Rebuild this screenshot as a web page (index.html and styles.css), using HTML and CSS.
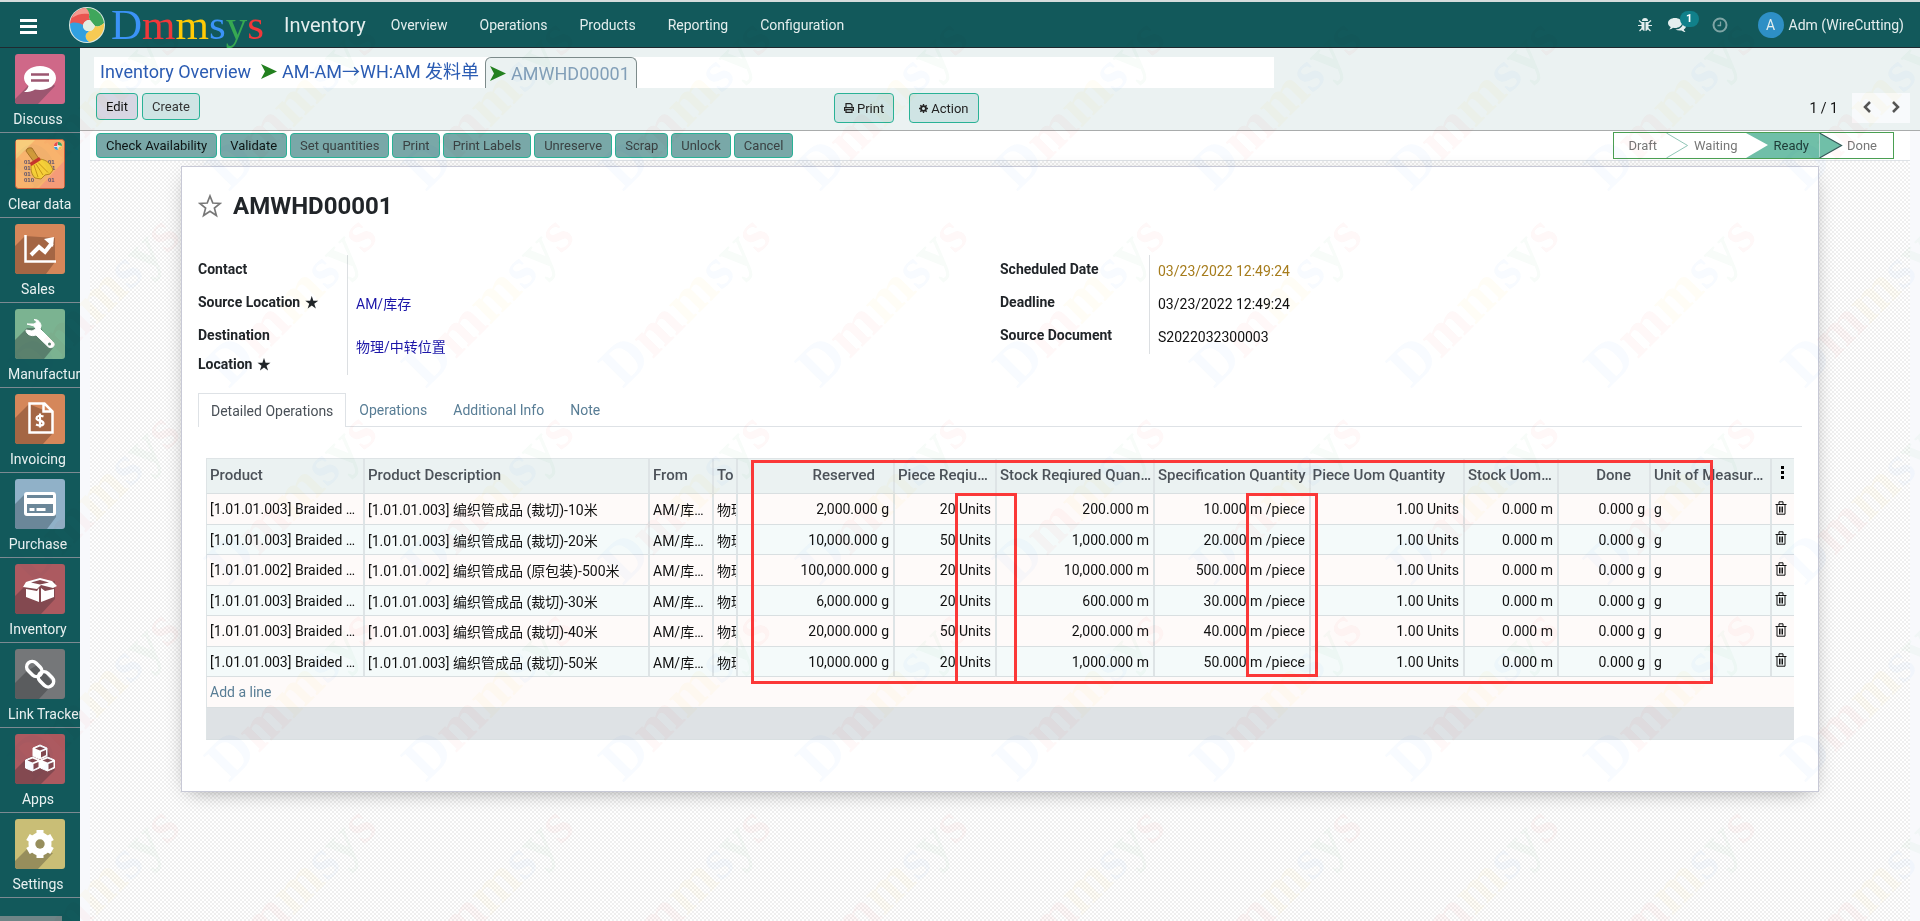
FILE: index.html
```html
<!DOCTYPE html>
<html lang="en">

<head>
    <meta charset="utf-8">
    <title>AMWHD00001 - Inventory</title>
    <link rel="stylesheet" href="styles.css">
</head>

<body>
    <svg class="defs" aria-hidden="true">
        <symbol id="trash" viewBox="0 0 12 14">
            <path d="M.5 3.500h11M4 3V.8h4V3M2 3.500v9.700h8V3.500M4.500 5.500v6M6 5.500v6M7.500 5.500v6" fill="none" stroke="#111" />
        </symbol>
        <symbol id="arrow" viewBox="0 0 16 15">
            <path d="M0 0l16 7.500L0 15l4-7.500z" fill="#23801f" />
        </symbol>
    </svg>

    <header class="navbar">
        <button class="menu-toggle" aria-label="Menu"><span></span><span></span><span></span></button>
        <a href="#" class="brand">
            <svg class="brand-ball" viewBox="0 0 36 36">
                <circle cx="18" cy="18" r="18" fill="#dcebe4" />
                <path d="M1 17C1 8 9 1 17 1c3 3 4 6 3 9l1 3c-4 0-6 2-7 5l-5-1c-3-1-6-1-8 0z" fill="#ea5550" />
                <path d="M3 11C6 4 12 1 17 1c2 2 3 4 3 6C14 6 8 7 3 11z" fill="#f49a90" />
                <path d="M17 1c9-1 17 6 18 15-3 3-6 4-9 3l-5-6-1-3c1-3 0-6-3-9z" fill="#3fa65b" />
                <path d="M35 16c1 9-5 17-15 19-3-2-4-5-3-8l3-3c3 0 5-2 6-5 3 1 6 0 9-3z" fill="#f6ca54" />
                <path d="M1 17c3-2 7-2 13 1 0 4 2 6 6 6l-3 3c-1 3 0 6 3 8C9 36 1 28 1 17z" fill="#31a0e0" />
                <path d="M14 18c1-3 3-5 7-5l5 6c-1 3-3 5-6 5-4 0-6-2-6-6z" fill="#e3eee2" />
            </svg>
            <span class="brand-name"><span class="c-blue">D</span><span class="c-red">m</span><span class="c-yellow">m</span><span class="c-blue">s</span><span class="c-green">y</span><span class="c-red">s</span></span>
        </a>
        <a href="#" class="app-name">Inventory</a>
        <nav class="nav-menu">
            <a href="#">Overview</a>
            <a href="#">Operations</a>
            <a href="#">Products</a>
            <a href="#">Reporting</a>
            <a href="#">Configuration</a>
        </nav>
        <div class="systray">
            <a href="#" class="tray-icon" aria-label="Debug">
                <svg width="14" height="14" viewBox="0 0 14 14">
                    <path d="M4 3a3 3 0 0 1 6 0z" fill="#e4eeee" />
                    <path d="M3.500 4h3v9C4.500 12.500 3.500 11 3.500 9zM7.500 4h3v5c0 2-1 3.500-3 4z" fill="#e4eeee" />
                    <path d="M1 2.500L4 5M13 2.500L10 5M0 7.500h4M14 7.500h-4M1.500 13L4.500 10M12.500 13L9.500 10" stroke="#e4eeee" stroke-width="1.200" />
                </svg>
            </a>
            <a href="#" class="tray-icon tray-chat" aria-label="Messages">
                <svg width="18" height="16" viewBox="0 0 18 16">
                    <path d="M7 1c4 0 7 2.200 7 5s-3 5-7 5c-.7 0-1.400 0-2-.2C3.800 12 2.500 12.500 1 12.500c1-.8 1.500-1.500 1.700-2.500C1 9 0 7.700 0 6c0-2.800 3-5 7-5z" fill="#e4eeee" />
                    <path d="M15 5c1.800 1 3 2.300 3 4 0 1.500-.8 2.700-2.200 3.500.2 1 .8 1.700 1.700 2.500-1.600 0-3-.7-4-1.500-2.500.3-4.500 0-6-1C12 12.300 15.500 9.500 15 5z" fill="#e4eeee" />
                </svg>
                <span class="badge">1</span>
            </a>
            <a href="#" class="tray-icon" aria-label="Activities">
                <svg width="16" height="16" viewBox="0 0 16 16">
                    <circle cx="8" cy="8" r="6.500" fill="none" stroke="#7fa5a5" stroke-width="2" />
                    <path d="M8.500 4.500v4H5.500" fill="none" stroke="#7fa5a5" stroke-width="1.300" />
                </svg>
            </a>
            <a href="#" class="user"><span class="avatar">A</span>Adm (WireCutting)</a>
        </div>
    </header>

    <div class="layout">
        <aside class="sidebar">
            <a href="#" class="app">
                <svg class="app-icon" viewBox="0 0 50 50">
                    <rect width="50" height="50" rx="3" fill="#cf6888" />
                    <path d="M9 36L0 45v2q0 3 3 3h20l17-18-12-16z" fill="#9c5670" />
                    <path d="M25 12c9 0 16 5 16 12s-7 12-16 12l-5-.5c-3 2-6 2.500-11 2.500 3-2 4-4 4.500-6C11 30 9 27 9 24c0-7 7-12 16-12z" fill="#fff" />
                    <path d="M16 20.500h18M16 26.500h18" stroke="#9c5670" stroke-width="2.500" />
                </svg>
                <span class="app-label">Discuss</span>
            </a>
            <a href="#" class="app">
                <svg class="app-icon" viewBox="0 0 50 50">
                    <rect x=".5" y=".5" width="49" height="49" rx="3" fill="#f8b36d" stroke="#c9603d" />
                    <path d="M1 20L20 1H1z" fill="#f8cd7c" />
                    <path d="M49 22L24 49h25z" fill="#f59b78" />
                    <g class="bits" fill="#58506e">
                        <text x="9" y="25">01</text>
                        <text x="33" y="25">01</text>
                        <text x="9" y="31">01</text>
                        <text x="37" y="31">1</text>
                        <text x="9" y="37">01</text>
                        <text x="9" y="43">010</text>
                        <text x="33" y="43">01</text>
                    </g>
                    <path d="M11 12q1-4 6-3l7 11-5 3z" fill="#d09a3a" stroke="#8c5c18" stroke-width=".7" />
                    <path d="M16 26l9-6c7 1 11 5 13 11l-3 4-5 1-4 4-6-1c-4-4-4-8-4-13z" fill="#f6cf38" stroke="#a87912" stroke-width=".8" />
                    <path d="M15.500 25.500l9.500-6" stroke="#c5352c" stroke-width="3.500" />
                    <path d="M19 26l4 12M21 25l7 11M23 23.500l10 10" stroke="#c08d14" stroke-width=".9" />
                    <circle cx="43" cy="7" r="4" fill="#eee" />
                    <path d="M39 7a4 4 0 0 1 4-4l-1 4z" fill="#e8504b" />
                    <path d="M43 3a4 4 0 0 1 4 4l-4-1z" fill="#3fa65b" />
                    <path d="M47 7a4 4 0 0 1-4 4l1-3z" fill="#f3c549" />
                    <path d="M39 8a4 4 0 0 0 4 3l-1-3z" fill="#35a3da" />
                </svg>
                <span class="app-label">Clear data</span>
            </a>
            <a href="#" class="app">
                <svg class="app-icon" viewBox="0 0 50 50">
                    <rect width="50" height="50" rx="3" fill="#d5875a" />
                    <path d="M10 12L0 22v25q0 3 3 3h28l9-12V14z" fill="#a46644" />
                    <path d="M10.500 11v26.500H41" fill="none" stroke="#fff" stroke-width="2.500" />
                    <path d="M16 31l8-8 6 5 7-9" fill="none" stroke="#fff" stroke-width="4" />
                    <path d="M29 15l10-2-1 10z" fill="#fff" />
                </svg>
                <span class="app-label">Sales</span>
            </a>
            <a href="#" class="app">
                <svg class="app-icon" viewBox="0 0 50 50">
                    <rect width="50" height="50" rx="3" fill="#7bb391" />
                    <path d="M12 19L0 31v16q0 3 3 3h26l9-11-12-20z" fill="#5b816d" />
                    <path d="M12 15h7l3-2-3-2.500C23 10 26 14 26 17l-1 3 12.500 12.500c4 3 0 8-4 5.500L21 26c-5 2-10-1-10-5l6 1 4-2-2-3z" fill="#fff" stroke="#fff" />
                    <circle cx="34.500" cy="35" r="1.500" fill="#5b816d" />
                </svg>
                <span class="app-label">Manufacturing</span>
            </a>
            <a href="#" class="app">
                <svg class="app-icon" viewBox="0 0 50 50">
                    <rect width="50" height="50" rx="3" fill="#d5875a" />
                    <path d="M14 10L0 24v23q0 3 3 3h25l10-11V20z" fill="#a46644" />
                    <path d="M14.500 9.500h15l8 8v21h-23zM28.500 9.500v8h9" fill="none" stroke="#fff" stroke-width="2.500" />
                    <path d="M28.500 22.500c-4-1.500-7-.5-7 1.700 0 3.300 7 1.500 7 5 0 2.500-4 3-7.500 1.300M25 19.500v14" fill="none" stroke="#fff" stroke-width="2.200" />
                </svg>
                <span class="app-label">Invoicing</span>
            </a>
            <a href="#" class="app">
                <svg class="app-icon" viewBox="0 0 50 50">
                    <rect width="50" height="50" rx="3" fill="#90b1c8" />
                    <path d="M10 15L0 25v22q0 3 3 3h29l9-12V14z" fill="#6b8799" />
                    <rect x="10.500" y="14.500" width="29" height="21" rx="1.500" fill="none" stroke="#fff" stroke-width="3" />
                    <path d="M10 22h30" stroke="#fff" stroke-width="6" />
                    <path d="M14.500 30.500h5M21.500 30.500h9" stroke="#fff" stroke-width="3" />
                </svg>
                <span class="app-label">Purchase</span>
            </a>
            <a href="#" class="app">
                <svg class="app-icon" viewBox="0 0 50 50">
                    <rect width="50" height="50" rx="3" fill="#ac5a60" />
                    <path d="M9 23L0 32v15q0 3 3 3h23l14-15V17z" fill="#834950" />
                    <path d="M14 17l11-3 12 3 5 5-4 2-12-3-4 4-14-2 3-5z" fill="#fff" />
                    <path d="M16 18.500l9-2.500 9 2.500-9 2z" fill="#834950" />
                    <path d="M11 25l11 2 2-3v14l-13-5zM39 25l-9 2-4-3v14l13-5z" fill="#fff" />
                </svg>
                <span class="app-label">Inventory</span>
            </a>
            <a href="#" class="app">
                <svg class="app-icon" viewBox="0 0 50 50">
                    <rect width="50" height="50" rx="3" fill="#757779" />
                    <path d="M12 22L0 34v13q0 3 3 3h21l14-15-14-20z" fill="#5a5c5e" />
                    <g fill="none" stroke="#fff" stroke-width="3.500">
                        <rect x="11" y="15" width="17" height="11" rx="5.500" transform="rotate(45 20 20)" />
                        <rect x="22" y="25" width="17" height="11" rx="5.500" transform="rotate(45 31 31)" />
                    </g>
                </svg>
                <span class="app-label">Link Tracker</span>
            </a>
            <a href="#" class="app">
                <svg class="app-icon" viewBox="0 0 50 50">
                    <rect width="50" height="50" rx="3" fill="#ac5a60" />
                    <path d="M11 25L0 36v11q0 3 3 3h23l14-14-8-22z" fill="#834950" />
                    <g fill="#fff" stroke="#fff" stroke-linejoin="round">
                        <path d="M18 14l7-3 7 3v8l-7 3-7-3zM10.500 26l7-3 7 3v8l-7 3-7-3zM25.500 26l7-3 7 3v8l-7 3-7-3z" />
                    </g>
                    <path d="M20 14.500l5-2 5 2-5 2zM26 18l5-2v5l-5 2.500zM12.500 26.500l5-2 5 2-5 2zM18.500 30l5-2v5l-5 2.500zM27.500 26.500l5-2 5 2-5 2zM33.500 30l5-2v5l-5 2.500z" fill="#834950" />
                </svg>
                <span class="app-label">Apps</span>
            </a>
            <a href="#" class="app">
                <svg class="app-icon" viewBox="0 0 50 50">
                    <rect width="50" height="50" rx="3" fill="#c9be76" />
                    <path d="M12 30L0 42v5q0 3 3 3h20l15-16z" fill="#978e5c" />
                    <circle cx="25" cy="25" r="8" fill="none" stroke="#fff" stroke-width="7" />
                    <path d="M25 11v28M13 18l24 14M37 18L13 32" stroke="#fff" stroke-width="7" />
                    <circle cx="25" cy="25" r="4.700" fill="#978e5c" />
                </svg>
                <span class="app-label">Settings</span>
            </a>
            <div class="sidebar-scroll"></div>
        </aside>

        <main class="content">
            <section class="control-panel">
                <ol class="breadcrumb">
                    <li><a href="#">Inventory Overview</a></li>
                    <li><svg class="crumb-arrow"><use href="#arrow" /></svg><a href="#">AM-AM→WH:AM 发料单</a></li>
                    <li class="current"><svg class="crumb-arrow"><use href="#arrow" /></svg>AMWHD00001</li>
                </ol>
                <div class="cp-row">
                    <div class="cp-left">
                        <button class="btn btn-edit">Edit</button>
                        <button class="btn">Create</button>
                    </div>
                    <div class="cp-center">
                        <button class="btn btn-tall">
                            <svg width="10" height="10" viewBox="0 0 10 10">
                                <path d="M2 4V.6h4.500L8 2v2M.6 8V4.600h8.800V8M2 6.600h6v2.800H2z" fill="none" stroke="#222" stroke-width="1.200" />
                            </svg>Print
                        </button>
                        <button class="btn btn-tall">
                            <svg width="9" height="9" viewBox="0 0 10 10">
                                <circle cx="5" cy="5" r="2.700" fill="none" stroke="#222" stroke-width="2" />
                                <path d="M5 0v2M5 8v2M0 5h2M8 5h2M1.500 1.500l1.300 1.300M7.200 7.200l1.300 1.300M8.500 1.500L7.200 2.800M2.800 7.200L1.500 8.500" stroke="#222" stroke-width="1.500" />
                            </svg>Action
                        </button>
                    </div>
                    <div class="pager">
                        <span>1 / 1</span>
                        <div class="pager-buttons">
                            <button aria-label="Previous"><svg width="8" height="12" viewBox="0 0 8 12"><path d="M7 1L2 6l5 5" /></svg></button>
                            <button aria-label="Next"><svg width="8" height="12" viewBox="0 0 8 12"><path d="M1 1l5 5-5 5" /></svg></button>
                        </div>
                    </div>
                </div>
            </section>

            <section class="form-view">
                <div class="statusbar">
                    <div class="status-buttons">
                        <button class="btn btn-action primary">Check Availability</button>
                        <button class="btn btn-action primary">Validate</button>
                        <button class="btn btn-action">Set quantities</button>
                        <button class="btn btn-action">Print</button>
                        <button class="btn btn-action">Print Labels</button>
                        <button class="btn btn-action">Unreserve</button>
                        <button class="btn btn-action">Scrap</button>
                        <button class="btn btn-action">Unlock</button>
                        <button class="btn btn-action">Cancel</button>
                    </div>
                    <ul class="steps">
                        <li class="draft">Draft<svg class="chevron" viewBox="0 0 24 26" width="24" height="25"><path d="M1 0l22 13L1 26" fill="none" stroke="#8cc4b4" /></svg></li>
                        <li class="waiting">Waiting</li>
                        <li class="ready">Ready<svg class="chevron" viewBox="0 0 24 26" width="24" height="25"><path d="M0 0l23 13L0 26" fill="#70bfa8" stroke="#355a58" stroke-width="1.200" /></svg></li>
                        <li class="done">Done</li>
                    </ul>
                </div>

                <div class="sheet">
                    <div class="title">
                        <svg class="star" viewBox="0 0 24 24">
                            <path d="M12 2l2.800 7 7.400.4-5.800 4.700 2 7.400L12 17.300l-6.400 4.200 2-7.400L1.800 9.400 9.200 9z" fill="none" stroke="#777" stroke-width="1.700" />
                        </svg>
                        <h1>AMWHD00001</h1>
                    </div>

                    <div class="groups">
                        <dl class="group">
                            <dt>Contact</dt>
                            <dd></dd>
                            <dt>Source Location <span class="required">★</span></dt>
                            <dd><a href="#">AM/库存</a></dd>
                            <dt class="two-lines">Destination<br>Location <span class="required">★</span></dt>
                            <dd><a href="#">物理/中转位置</a></dd>
                        </dl>
                        <dl class="group">
                            <dt>Scheduled Date</dt>
                            <dd class="late">03/23/2022 12:49:24</dd>
                            <dt>Deadline</dt>
                            <dd>03/23/2022 12:49:24</dd>
                            <dt>Source Document</dt>
                            <dd>S2022032300003</dd>
                        </dl>
                    </div>

                    <nav class="tabs">
                        <a href="#" class="active">Detailed Operations</a>
                        <a href="#">Operations</a>
                        <a href="#">Additional Info</a>
                        <a href="#">Note</a>
                    </nav>

                    <div class="list">
                        <table>
                            <colgroup>
                                <col class="w-product">
                                <col>
                                <col class="w-from">
                                <col class="w-icon">
                                <col class="w-reserved">
                                <col class="w-piece">
                                <col class="w-stock">
                                <col class="w-spec">
                                <col class="w-piece-uom">
                                <col class="w-stock-uom">
                                <col class="w-done">
                                <col class="w-unit">
                                <col class="w-icon">
                            </colgroup>
                            <thead>
                                <tr>
                                    <th>Product</th>
                                    <th>Product Description</th>
                                    <th>From</th>
                                    <th class="clip">To</th>
                                    <th class="num sort">Reserved</th>
                                    <th>Piece Reqiured Quantity</th>
                                    <th class="tight">Stock Reqiured Quantity</th>
                                    <th class="clip">Specification Quantity</th>
                                    <th class="num sort">Piece Uom Quantity</th>
                                    <th>Stock Uom Quantity</th>
                                    <th class="num sort">Done</th>
                                    <th>Unit of Measurement</th>
                                    <th class="clip"><svg class="dots" width="4" height="14"><path d="M0 0h3v3H0zM0 5h3v3H0zM0 10h3v3H0z" /></svg></th>
                                </tr>
                            </thead>
                            <tbody>
                                <tr>
                                    <td>[1.01.01.003] Braided sleeve</td>
                                    <td>[1.01.01.003] 编织管成品 (裁切)-10米</td>
                                    <td>AM/库存</td>
                                    <td class="clip">物理</td>
                                    <td class="num">2,000.000 g</td>
                                    <td class="num">20 Units</td>
                                    <td class="num">200.000 m</td>
                                    <td class="num">10.000 m /piece</td>
                                    <td class="num">1.00 Units</td>
                                    <td class="num">0.000 m</td>
                                    <td class="num">0.000 g</td>
                                    <td>g</td>
                                    <td class="clip"><button class="delete" aria-label="Delete"><svg><use href="#trash" /></svg></button></td>
                                </tr>
                                <tr>
                                    <td>[1.01.01.003] Braided sleeve</td>
                                    <td>[1.01.01.003] 编织管成品 (裁切)-20米</td>
                                    <td>AM/库存</td>
                                    <td class="clip">物理</td>
                                    <td class="num">10,000.000 g</td>
                                    <td class="num">50 Units</td>
                                    <td class="num">1,000.000 m</td>
                                    <td class="num">20.000 m /piece</td>
                                    <td class="num">1.00 Units</td>
                                    <td class="num">0.000 m</td>
                                    <td class="num">0.000 g</td>
                                    <td>g</td>
                                    <td class="clip"><button class="delete" aria-label="Delete"><svg><use href="#trash" /></svg></button></td>
                                </tr>
                                <tr>
                                    <td>[1.01.01.002] Braided sleeve</td>
                                    <td>[1.01.01.002] 编织管成品 (原包装)-500米</td>
                                    <td>AM/库存</td>
                                    <td class="clip">物理</td>
                                    <td class="num">100,000.000 g</td>
                                    <td class="num">20 Units</td>
                                    <td class="num">10,000.000 m</td>
                                    <td class="num">500.000 m /piece</td>
                                    <td class="num">1.00 Units</td>
                                    <td class="num">0.000 m</td>
                                    <td class="num">0.000 g</td>
                                    <td>g</td>
                                    <td class="clip"><button class="delete" aria-label="Delete"><svg><use href="#trash" /></svg></button></td>
                                </tr>
                                <tr>
                                    <td>[1.01.01.003] Braided sleeve</td>
                                    <td>[1.01.01.003] 编织管成品 (裁切)-30米</td>
                                    <td>AM/库存</td>
                                    <td class="clip">物理</td>
                                    <td class="num">6,000.000 g</td>
                                    <td class="num">20 Units</td>
                                    <td class="num">600.000 m</td>
                                    <td class="num">30.000 m /piece</td>
                                    <td class="num">1.00 Units</td>
                                    <td class="num">0.000 m</td>
                                    <td class="num">0.000 g</td>
                                    <td>g</td>
                                    <td class="clip"><button class="delete" aria-label="Delete"><svg><use href="#trash" /></svg></button></td>
                                </tr>
                                <tr>
                                    <td>[1.01.01.003] Braided sleeve</td>
                                    <td>[1.01.01.003] 编织管成品 (裁切)-40米</td>
                                    <td>AM/库存</td>
                                    <td class="clip">物理</td>
                                    <td class="num">20,000.000 g</td>
                                    <td class="num">50 Units</td>
                                    <td class="num">2,000.000 m</td>
                                    <td class="num">40.000 m /piece</td>
                                    <td class="num">1.00 Units</td>
                                    <td class="num">0.000 m</td>
                                    <td class="num">0.000 g</td>
                                    <td>g</td>
                                    <td class="clip"><button class="delete" aria-label="Delete"><svg><use href="#trash" /></svg></button></td>
                                </tr>
                                <tr>
                                    <td>[1.01.01.003] Braided sleeve</td>
                                    <td>[1.01.01.003] 编织管成品 (裁切)-50米</td>
                                    <td>AM/库存</td>
                                    <td class="clip">物理</td>
                                    <td class="num">10,000.000 g</td>
                                    <td class="num">20 Units</td>
                                    <td class="num">1,000.000 m</td>
                                    <td class="num">50.000 m /piece</td>
                                    <td class="num">1.00 Units</td>
                                    <td class="num">0.000 m</td>
                                    <td class="num">0.000 g</td>
                                    <td>g</td>
                                    <td class="clip"><button class="delete" aria-label="Delete"><svg><use href="#trash" /></svg></button></td>
                                </tr>
                                <tr>
                                    <td colspan="13"><a href="#">Add a line</a></td>
                                </tr>
                            </tbody>
                            <tfoot>
                                <tr>
                                    <td colspan="13"></td>
                                </tr>
                            </tfoot>
                        </table>
                        <div class="mark mark-all"></div>
                        <div class="mark mark-units"></div>
                        <div class="mark mark-piece"></div>
                    </div>
                </div>
            </section>
        </main>
    </div>

    <!-- repeated watermark over the whole window -->
    <svg class="watermark" aria-hidden="true">
        <defs>
            <pattern id="wm" width="197" height="197" patternUnits="userSpaceOnUse">
                <text x="0" y="0" transform="translate(32 192) rotate(-45)"><tspan fill="#3b8ff0">D</tspan><tspan fill="#ea3a35">m</tspan><tspan fill="#fccc11">m</tspan><tspan fill="#3b8ff0">s</tspan><tspan fill="#34a853">y</tspan><tspan fill="#ea3a35">s</tspan></text>
            </pattern>
        </defs>
        <rect width="100%" height="100%" fill="url(#wm)" />
    </svg>
</body>

</html>
```
FILE: styles.css
```css
* {
    box-sizing: border-box;
}

body {
    margin: 0;
    min-height: 100vh;
    display: flex;
    flex-direction: column;
    font-family: Roboto, "Noto Sans CJK SC", sans-serif;
    font-size: 14px;
    color: #111;
    background: #f8f9fc;
}

a {
    text-decoration: none;
}

button {
    font-family: inherit;
    cursor: pointer;
}

.defs {
    display: none;
}

/* top bar */
.navbar {
    display: flex;
    align-items: center;
    height: 48px;
    background: #12595b;
    border-top: 2px solid #d5dcdc;
    border-bottom: 1px solid #1f2a30;
    padding: 0 16px 0 20px;
}

.navbar a {
    color: #e4eeee;
}

.menu-toggle {
    display: flex;
    flex-direction: column;
    gap: 3px;
    width: 17px;
    padding: 0;
    border: 0;
    background: none;
    margin: 4px 32px 0 0;
}

.menu-toggle span {
    height: 3px;
    background: #fff;
}

.brand {
    display: flex;
    align-items: center;
    gap: 6px;
    margin-right: 20px;
}

.brand-ball {
    width: 36px;
    height: 36px;
}

.brand-name {
    font-family: "Liberation Serif", serif;
    font-size: 43px;
    line-height: 44px;
}

.c-blue { color: #3b93f7; }
.c-red { color: #f0383a; }
.c-yellow { color: #ffcb05; }
.c-green { color: #36a852; }

.app-name {
    font-size: 20px;
    margin-right: 25px;
}

.nav-menu {
    display: flex;
    gap: 32px;
}

.systray {
    display: flex;
    align-items: center;
    margin-left: auto;
    gap: 16px;
}

.tray-icon {
    display: flex;
    position: relative;
}

.tray-chat {
    margin-right: 10px;
}

.badge {
    position: absolute;
    left: 12px;
    top: -6px;
    width: 19px;
    height: 16px;
    border-radius: 8px;
    background: #10808a;
    color: #fff;
    font-size: 11px;
    font-weight: bold;
    line-height: 15px;
    text-align: center;
}

.user {
    display: flex;
    align-items: center;
    gap: 5px;
    margin-left: 14px;
}

.avatar {
    width: 26px;
    height: 26px;
    border-radius: 50%;
    background: #2e8fc5;
    line-height: 26px;
    text-align: center;
}

.layout {
    display: flex;
    flex: 1;
}

/* app list */
.sidebar {
    display: flex;
    flex-direction: column;
    flex: none;
    width: 80px;
    background: #12595b;
    overflow: hidden;
}

.app {
    display: block;
    height: 85px;
    padding: 6px 8px 0;
    border-bottom: 1px solid #7c8a92;
    color: #e9f1f1;
    white-space: nowrap;
}

.app-icon {
    display: block;
    width: 50px;
    height: 50px;
    margin-left: 7px;
}

.bits {
    font-family: "Liberation Sans", sans-serif;
    font-size: 6px;
    font-weight: bold;
}

.app-label {
    display: block;
    line-height: 30px;
    width: max-content;
    min-width: 60px;
    text-align: center;
}

.sidebar-scroll {
    width: 62px;
    height: 5px;
    margin-top: auto;
    background: #6f8587;
}

.content {
    flex: 1;
    min-width: 0;
    display: flex;
    flex-direction: column;
}

/* control panel */
.control-panel {
    height: 83px;
    background: #ebf2f2;
    border-bottom: 1px solid #a9acac;
    padding: 9px 10px 0 14px;
}

.breadcrumb {
    display: flex;
    align-items: center;
    list-style: none;
    margin: 0;
    width: 65%;
    height: 31px;
    padding: 0 6px;
    background: #fff;
    font-size: 18px;
    white-space: nowrap;
}

.breadcrumb li {
    display: flex;
    align-items: center;
    height: 31px;
    line-height: 29px;
    padding-bottom: 2px;
}

.breadcrumb a {
    color: #2b5cb3;
}

.crumb-arrow {
    width: 16px;
    height: 15px;
    margin-right: 5px;
}

.breadcrumb li + li {
    margin-left: 10px;
}

.breadcrumb li.current {
    margin-left: 6px;
    padding: 0 6px 0 4px;
    color: #829fb8;
    background: #ebf2f2;
    border: 1px solid #7d8b8b;
    border-bottom: 0;
    border-radius: 6px 6px 0 0;
}

.cp-row {
    display: grid;
    grid-template-columns: 740px auto 1fr;
    align-items: start;
    padding-top: 5px;
}

.cp-left {
    display: flex;
    gap: 4px;
    padding-left: 2px;
}

.cp-center {
    display: flex;
    gap: 15px;
}

.btn {
    height: 27px;
    padding: 0 9px;
    border: 1px solid #29b296;
    border-radius: 4px;
    background: #cfe4e4;
    color: #333;
    font-size: 13px;
    white-space: nowrap;
}

.btn-edit {
    background: #d7d6e3;
    color: #111;
}

.btn-tall {
    height: 30px;
    color: #222;
}

.btn-tall svg {
    margin-right: 3px;
}

.pager {
    display: flex;
    align-items: center;
    justify-content: flex-end;
    gap: 14px;
}

.pager-buttons {
    display: flex;
    background: #f8fafc;
}

.pager-buttons button {
    width: 29px;
    height: 30px;
    padding: 0;
    border: 0;
    background: none;
}

.pager-buttons path {
    fill: none;
    stroke: #555;
    stroke-width: 2.500;
}

/* form */
.form-view {
    flex: 1;
    margin: 0 10px;
    background: repeating-conic-gradient(#efefef 0 25%, #fff 0 50%) 0 0 / 4px 4px;
}

.statusbar {
    display: flex;
    justify-content: space-between;
    align-items: center;
    height: 30px;
    padding: 0 16px 0 6px;
    background: #fff;
    border-bottom: 1px solid #dee2e6;
}

.status-buttons {
    display: flex;
    gap: 3px;
}

.btn-action {
    height: 25px;
    background: #79a8a8;
    color: #3a4142;
}

.btn-action.primary {
    color: #0d1414;
}

.steps {
    display: flex;
    list-style: none;
    margin: 0;
    padding: 0;
    height: 27px;
    border: 1px solid #4a9f52;
    font-size: 13px;
    line-height: 25px;
    color: #777;
}

.steps li {
    position: relative;
}

.chevron {
    position: absolute;
    left: 100%;
    top: 0;
    z-index: 1;
}

.draft {
    padding: 0 8px 0 15px;
}

.waiting {
    padding: 0 8px 0 29px;
}

.steps .ready {
    padding: 0 10px 0 28px;
    background: #70bfa8;
    color: #1d3a35;
}

.ready::before {
    content: "";
    position: absolute;
    left: 0;
    top: 0;
    border: solid transparent;
    border-width: 12px 0 13px 22px;
    border-left-color: #fff;
}

.done {
    padding: 0 16px 0 28px;
}

.sheet {
    margin: 5px 91px 0;
    padding: 25px 16px 51px;
    background: #fff;
    border: 1px solid #c8c9d6;
    box-shadow: 0 5px 20px -8px rgba(0, 0, 0, 0.45);
}

.title {
    display: flex;
    align-items: center;
    gap: 11px;
}

.star {
    width: 24px;
    height: 24px;
}

h1 {
    margin: 0;
    font-size: 24px;
    line-height: 28px;
    font-weight: bold;
    color: #212529;
}

.groups {
    display: grid;
    grid-template-columns: 1fr 1fr;
    align-items: start;
    margin-top: 35px;
}

.group {
    display: grid;
    grid-template-columns: 149px 1fr;
    grid-auto-rows: minmax(33px, auto);
    margin: 0;
}

.group dt {
    font-weight: bold;
    line-height: 29px;
    color: #212529;
}

.group .two-lines {
    margin-bottom: -4px;
}

.required {
    margin-left: 1px;
}

.group dd {
    display: flex;
    align-items: center;
    margin: 0;
    padding: 0 0 2px 8px;
    line-height: 20px;
    border-left: 1px solid #dcdfe2;
}

.group dd a {
    color: #1c16a8;
}

.group .late {
    color: #a67c1c;
}

/* notebook */
.tabs {
    display: flex;
    height: 34px;
    margin-top: 18px;
    border-bottom: 1px solid #dee2e6;
}

.tabs a {
    height: 34px;
    padding: 0 13px;
    line-height: 34px;
    color: #587d95;
}

.tabs .active {
    color: #495057;
    background: #fff;
    border: 1px solid #dee2e6;
    border-bottom: 0;
    padding: 0 12px;
}

/* operation lines */
.list {
    position: relative;
    margin: 31px 8px 0;
}

table {
    width: 100%;
    table-layout: fixed;
    border-collapse: separate;
    border-spacing: 0;
}

.w-product { width: 157px; }
.w-from { width: 64px; }
.w-icon { width: 24px; }
.w-reserved { width: 157px; }
.w-piece { width: 102px; }
.w-stock { width: 158px; }
.w-spec { width: 156px; }
.w-piece-uom { width: 154px; }
.w-stock-uom { width: 94px; }
.w-done { width: 92px; }
.w-unit { width: 121px; }

th,
td {
    padding: 0 4px 0 3px;
    text-align: left;
    white-space: nowrap;
    overflow: hidden;
    text-overflow: ellipsis;
    border-left: 2px solid #dee4e6;
    border-bottom: 1px solid #d9dfe1;
}

th:first-child,
td:first-child {
    border-left-width: 1px;
}

th {
    height: 36px;
    padding-bottom: 2px;
    background: #ebf2f2;
    border-top: 1px solid #dee4e6;
    color: #4c5259;
    font-size: 15px;
    font-weight: 500;
}

.num {
    text-align: right;
}

.sort {
    padding-left: 0;
    padding-right: 18px;
}

.tight {
    padding-right: 0;
}

.clip {
    text-overflow: clip;
    padding-right: 0;
}

.dots {
    margin-left: 6px;
}

tbody tr {
    height: 30px;
    background: #f4fafa;
}

tbody tr:nth-child(odd) {
    height: 31px;
    background: #fefaf9;
}

tbody a {
    color: #587d95;
}

tfoot td {
    height: 32px;
    background: #dee2e5;
}

.delete {
    padding: 0;
    border: 0;
    background: none;
}

.delete svg {
    display: block;
    width: 12px;
    height: 14px;
}

.mark {
    position: absolute;
    border: 3px solid #fb3838;
}

.mark-all {
    left: 545px;
    right: 81px;
    top: 2px;
    height: 224px;
}

.mark-units {
    left: 749px;
    width: 62px;
    top: 35px;
    height: 191px;
}

.mark-piece {
    left: 1040px;
    width: 72px;
    top: 35px;
    height: 184px;
}

.watermark {
    position: absolute;
    inset: 0;
    width: 100%;
    height: 100%;
    pointer-events: none;
    mix-blend-mode: multiply;
    opacity: 0.04;
    font-family: "Liberation Serif", serif;
    font-size: 58px;
    font-weight: bold;
}
```
